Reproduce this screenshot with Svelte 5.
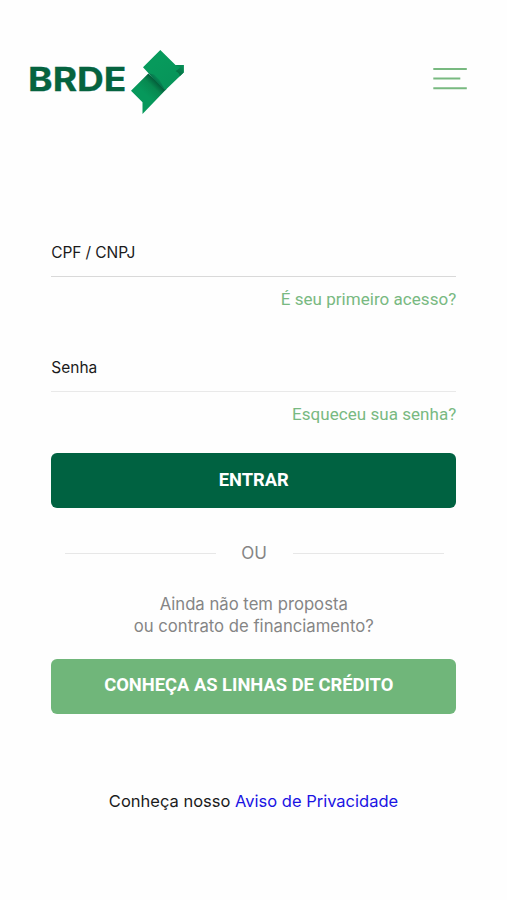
<script>
  const fields = [
    { id: 'doc', label: 'CPF / CNPJ', link: 'É seu primeiro acesso?' },
    { id: 'pass', label: 'Senha', link: 'Esqueceu sua senha?' }
  ];
</script>

<main>
  <header>
    <svg class="logo" width="160" height="70" viewBox="27 47 160 70" role="img" aria-label="BRDE">
      <defs>
        <linearGradient id="lower" gradientUnits="userSpaceOnUse" x1="146" y1="95" x2="158" y2="82.5">
          <stop offset="0" stop-color="#06985b" />
          <stop offset=".6" stop-color="#078950" />
          <stop offset="1" stop-color="#035b39" />
        </linearGradient>
        <linearGradient id="upper" gradientUnits="userSpaceOnUse" x1="154" y1="64" x2="168" y2="82">
          <stop offset="0" stop-color="#079a5c" />
          <stop offset="1" stop-color="#07955a" />
        </linearGradient>
        <linearGradient id="fold" gradientUnits="userSpaceOnUse" x1="182" y1="66" x2="175" y2="74">
          <stop offset="0" stop-color="#078d55" />
          <stop offset="1" stop-color="#03683f" />
        </linearGradient>
        <linearGradient id="crease" gradientUnits="userSpaceOnUse" x1="156" y1="82" x2="160" y2="78">
          <stop offset="0" stop-color="#05704a" />
          <stop offset="1" stop-color="#07955a" />
        </linearGradient>
      </defs>
      <text x="28.1" y="90.7" textLength="98.3" lengthAdjust="spacingAndGlyphs">BRDE</text>
      <path d="M148.3 73.500 131 90.8l11.5 11.5V114l24-25Z" fill="url(#lower)" />
      <path d="M160.3 50 143 67.3l6 6.400L165.200 90.200 183.7 72.5V65h-8.2Z" fill="url(#upper)" />
      <path d="M148.5 73.200 165.200 90.200 159.500 80 154 74.5Z" fill="url(#crease)" />
      <path d="M175.5 65h8.2v7.5l-4 3.8c.2-2.2-1-3.6-4.2-5.3 2-1 3.6-2.600 5-4Z" fill="url(#fold)" />
    </svg>
    <button class="menu" aria-label="Menu">
      <svg width="36" height="24" viewBox="0 0 36 24" fill="none" stroke="#78b980" stroke-width="2">
        <path d="M1.300 1.900h33.500M1.300 11.500h27M1.300 21.300h33.500" />
      </svg>
    </button>
  </header>

  <form>
    {#each fields as field (field.id)}
      <section class="field {field.id}">
        <div class="line"><span>{field.label}</span></div>
        <a href="#{field.id}"><span>{field.link}</span></a>
      </section>
    {/each}
    <button type="button" class="action enter"><span>ENTRAR</span></button>
    <div class="divider"><i></i><span>OU</span><i></i></div>
    <p class="question">Ainda não tem proposta<br />ou contrato de financiamento?</p>
    <button type="button" class="action credit"><span>CONHEÇA AS LINHAS DE CRÉDITO</span></button>
  </form>

  <footer>Conheça nosso <a href="#privacy">Aviso de Privacidade</a></footer>
</main>

<style>
  :global(body) { background: #fff; }
  main {
    box-sizing: border-box;
    width: 507px;
    height: 900px;
    overflow: hidden;
    background: #fefefe;
    color: #1b1b1b;
    font-family: Inter, "Liberation Sans", sans-serif;
    font-size: 16px;
  }
  header {
    display: flex;
    justify-content: space-between;
    align-items: flex-start;
    padding: 47px 39px 0 27px;
    height: 70px;
  }
  .logo text {
    font: 700 32px Inter, sans-serif;
    fill: #05633f;
    stroke: #05633f;
    stroke-width: .3;
  }
  .menu {
    display: flex;
    margin-top: 20px;
    padding: 0;
    border: 0;
    background: none;
  }
  form {
    width: 405px;
    margin: 0 auto;
    padding: 112px 0 0 .5px;
  }
  .field { height: 115px; }
  .line {
    box-sizing: border-box;
    height: 48px;
    padding-top: 14px;
    border-bottom: 1px solid #d9d9d9;
    font-size: 15.5px;
    line-height: 20px;
    letter-spacing: -.1px;
  }
  .pass .line { border-color: #e9e9e9; letter-spacing: 0; }
  .field a {
    display: block;
    margin-top: 12px;
    color: #78b981;
    text-align: right;
    text-decoration: none;
    font: 400 17px/20px Roboto, sans-serif;
    letter-spacing: .04px;
  }
  .pass a { margin-top: 11.5px; }
  .action {
    display: block;
    width: 405px;
    height: 55px;
    padding: 0 0 1px;
    border: 0;
    border-radius: 6px;
    color: #fff;
    font: 700 18px/22px Roboto, sans-serif;
  }
  .enter { margin-top: -6.5px; background: #006241; font-size: 18.3px; }
  .credit {
    margin-top: 21.5px;
    padding: 0 10px 2px 0;
    background: #70b67a;
    font-size: 18.35px;
  }
  .divider {
    display: flex;
    align-items: center;
    justify-content: space-between;
    height: 20px;
    margin: 35.5px 12px 0 13.5px;
    color: #858585;
    font-size: 17px;
  }
  .divider span { margin-left: -1px; }
  .divider i { width: 151px; height: 1px; background: #e7e7e7; }
  .question {
    margin: 30px 0 0;
    color: #858585;
    text-align: center;
    font-size: 16.7px;
    line-height: 22px;
  }
  footer {
    margin-top: 76.5px;
    text-align: center;
    font-size: 16.5px;
    line-height: 22px;
  }
  footer a { color: #1a13e3; text-decoration: none; }
</style>
